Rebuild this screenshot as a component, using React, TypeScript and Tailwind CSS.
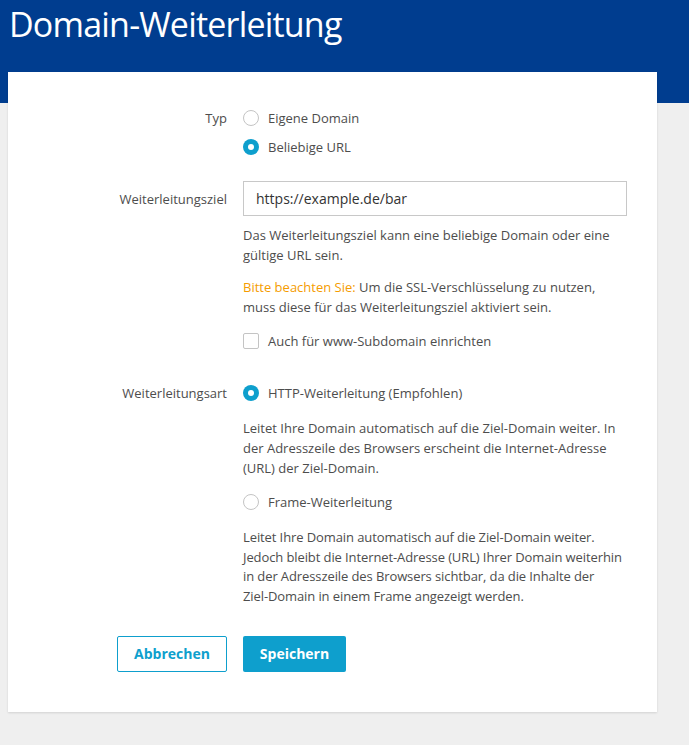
import { useState } from 'react'

function Radio({ checked, label, onClick }: { checked: boolean; label: string; onClick: () => void }) {
  return (
    <label className="flex h-5 cursor-pointer items-center gap-[9px]" onClick={onClick}>
      {checked ? (
        <span className="flex h-4 w-4 items-center justify-center rounded-full bg-[#0e9fcd]">
          <span className="h-[6px] w-[6px] rounded-full bg-white" />
        </span>
      ) : (
        <span className="h-4 w-4 rounded-full border border-[#c4c4c4] bg-white" />
      )}
      <span>{label}</span>
    </label>
  )
}

export default function App() {
  const [typ, setTyp] = useState('url')
  const [art, setArt] = useState('http')
  const [www, setWww] = useState(false)

  return (
    <div className="min-h-[745px] bg-[#efefef] font-['Open_Sans',sans-serif] text-[13px] leading-5 text-[#4d4d4d]">
      <div className="h-[103px] bg-[#003d8f] px-[9px] pt-[2px]">
        <h1 className="text-[34px] leading-[45px] tracking-[-0.8px] text-white">Domain-Weiterleitung</h1>
      </div>

      <div className="-mt-[31px] ml-2 w-[649px] bg-white pt-9 pb-10 shadow-[0_1px_2px_rgba(0,0,0,0.12)]">
        <div className="grid grid-cols-[219px_384px] gap-x-4">
          <div className="text-right leading-5">Typ</div>
          <div className="flex flex-col gap-[9px]">
            <Radio checked={typ === 'own'} label="Eigene Domain" onClick={() => setTyp('own')} />
            <Radio checked={typ === 'url'} label="Beliebige URL" onClick={() => setTyp('url')} />
          </div>

          <div className="mt-6 flex h-[35px] items-center justify-end">Weiterleitungsziel</div>
          <div className="mt-6">
            <input
              defaultValue="https://example.de/bar"
              className="h-[35px] w-full border border-[#c8c8c8] px-3 text-[14px] text-[#333] outline-none"
            />
            <p className="mt-[9px]">
              Das Weiterleitungsziel kann eine beliebige Domain oder eine gültige URL sein.
            </p>
            <p className="mt-3">
              <span className="text-[#f59c00]">Bitte beachten Sie: </span>
              Um die SSL-Verschlüsselung zu nutzen, muss diese für das Weiterleitungsziel aktiviert sein.
            </p>
            <label className="mt-[14px] flex h-5 cursor-pointer items-center gap-[9px]" onClick={() => setWww(!www)}>
              <span
                className={
                  www
                    ? 'flex h-4 w-4 items-center justify-center rounded-[2px] bg-[#0e9fcd] text-[11px] text-white'
                    : 'h-4 w-4 rounded-[2px] border border-[#c4c4c4] bg-white'
                }
              >
                {www ? '✓' : ''}
              </span>
              <span>Auch für www-Subdomain einrichten</span>
            </label>
          </div>

          <div className="mt-8 text-right">Weiterleitungsart</div>
          <div className="mt-8">
            <Radio checked={art === 'http'} label="HTTP-Weiterleitung (Empfohlen)" onClick={() => setArt('http')} />
            <p className="mt-[15px] pr-[2px]">
              Leitet Ihre Domain automatisch auf die Ziel-Domain weiter. In der Adresszeile des Browsers erscheint
              die Internet-Adresse (URL) der Ziel-Domain.
            </p>
            <div className="mt-[14px]">
              <Radio checked={art === 'frame'} label="Frame-Weiterleitung" onClick={() => setArt('frame')} />
            </div>
            <p className="-mr-4 mt-4 leading-[19.5px] tracking-[-0.1px]">
              Leitet Ihre Domain automatisch auf die Ziel-Domain weiter.
              <br />
              Jedoch bleibt die Internet-Adresse (URL) Ihrer Domain weiterhin
              <br />
              in der Adresszeile des Browsers sichtbar, da die Inhalte der
              <br />
              Ziel-Domain in einem Frame angezeigt werden.
            </p>
          </div>

          <div className="mt-[30px] flex justify-end">
            <button className="h-9 w-[110px] rounded-[2px] border border-[#0e9fcd] bg-white text-[14px] font-bold text-[#0e9fcd]">
              Abbrechen
            </button>
          </div>
          <div className="mt-[30px]">
            <button className="h-9 w-[103px] rounded-[2px] bg-[#0e9fcd] text-[14px] font-bold text-white">
              Speichern
            </button>
          </div>
        </div>
      </div>
    </div>
  )
}
